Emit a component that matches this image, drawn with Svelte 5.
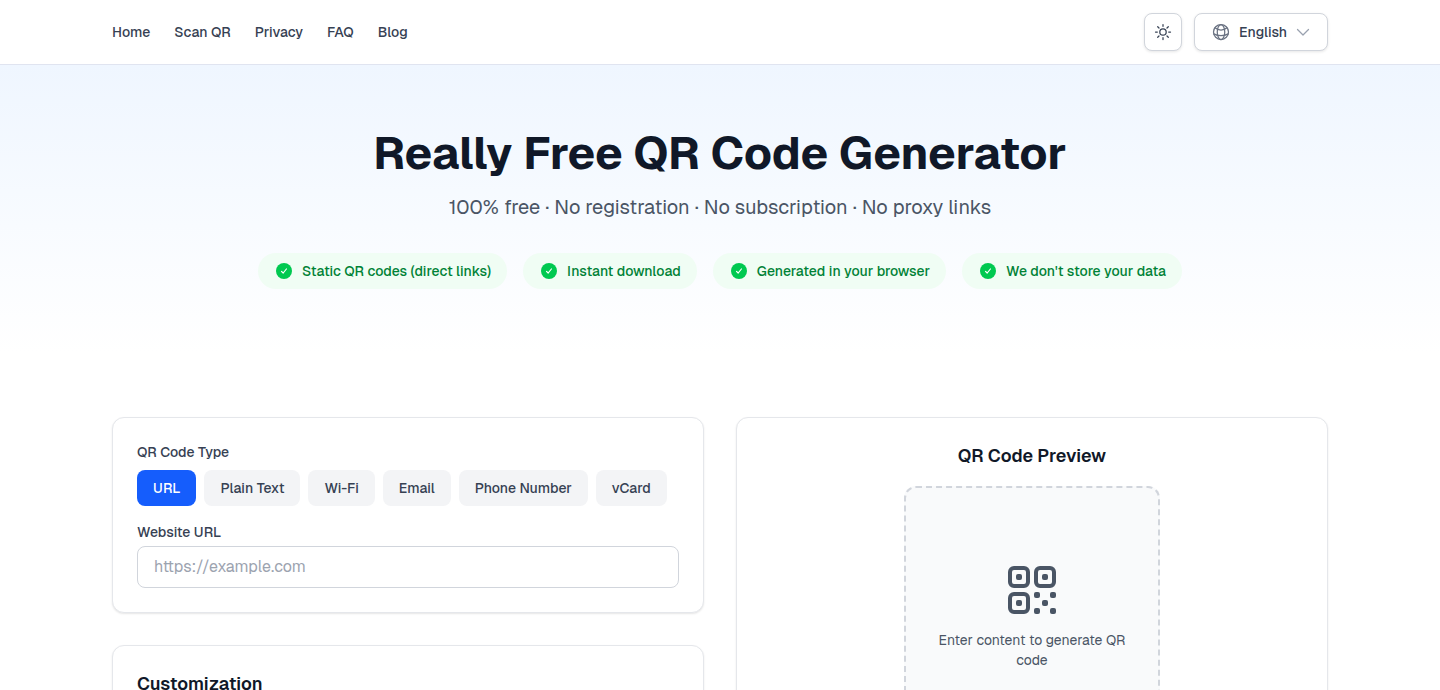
<script lang="ts">
    const links = ['Home', 'Scan QR', 'Privacy', 'FAQ', 'Blog'];

    const badges = [
        'Static QR codes (direct links)',
        'Instant download',
        'Generated in your browser',
        "We don't store your data"
    ];

    const types = ['URL', 'Plain Text', 'Wi-Fi', 'Email', 'Phone Number', 'vCard'];

    let selectedType: string = $state('URL');
    let url: string = $state('');
    let language: string = $state('en');
</script>

<header class="header">
    <div class="container header-inner">
        <nav class="nav">
            {#each links as link}
                <a href="#{link.toLowerCase().replace(' ', '-')}">{link}</a>
            {/each}
        </nav>

        <div class="actions">
            <button class="theme-button" aria-label="Toggle theme">
                <svg viewBox="0 0 20 20" width="20" height="20" fill="none" stroke="currentColor" stroke-width="1.25" stroke-linecap="round">
                    <circle cx="10" cy="10" r="3.2" />
                    <path d="M10 2.5v1.8M10 15.7v1.8M2.5 10h1.8M15.7 10h1.8M4.7 4.7l1.3 1.3M14 14l1.3 1.3M4.7 15.3l1.3-1.3M14 6l1.3-1.3" />
                </svg>
            </button>

            <div class="language">
                <svg class="globe" viewBox="0 0 20 20" width="20" height="20" fill="none" stroke="currentColor" stroke-width="1.25" stroke-linecap="round">
                    <circle cx="10" cy="10" r="7.5" />
                    <ellipse cx="10" cy="10" rx="3.75" ry="7.5" />
                    <path d="M4 5.700c1.600 1.500 3.700 2.300 6 2.300s4.400-.8 6-2.300M2.700 11.900c2.200 1.200 4.600 1.800 7.300 1.800s5.100-.6 7.300-1.800" />
                </svg>
                <select aria-label="Language" bind:value={language}>
                    <option value="en">English</option>
                </select>
                <svg class="chevron" viewBox="0 0 16 16" width="16" height="16" fill="none" stroke="currentColor" stroke-width="1.25" stroke-linecap="round" stroke-linejoin="round">
                    <path d="M2.5 5.5L8 11l5.500-5.500" />
                </svg>
            </div>
        </div>
    </div>
</header>

<section class="hero">
    <div class="container">
        <h1>Really Free QR Code Generator</h1>
        <p class="subtitle">100% free · No registration · No subscription · No proxy links</p>

        <ul class="badges">
            {#each badges as badge}
                <li>
                    <svg viewBox="0 0 20 20" width="20" height="20">
                        <circle cx="10" cy="10" r="8" fill="#00c950" />
                        <path d="M7.5 10.3l1.700 1.700 3.200-4" fill="none" stroke="white" stroke-width="1.2" stroke-linecap="round" stroke-linejoin="round" />
                    </svg>
                    {badge}
                </li>
            {/each}
        </ul>
    </div>
</section>

<main class="container main">
    <div class="column">
        <!-- Content type and its form -->
        <div class="card">
            <p class="label" id="type-label">QR Code Type</p>
            <div class="types" role="group" aria-labelledby="type-label">
                {#each types as type}
                    <button class:active={selectedType === type} onclick={() => (selectedType = type)}>{type}</button>
                {/each}
            </div>

            <label class="label" for="url">Website URL</label>
            <input id="url" type="url" placeholder="https://example.com" bind:value={url} />
        </div>

        <div class="card">
            <h2>Customization</h2>
        </div>
    </div>

    <div class="card preview">
        <h2>QR Code Preview</h2>
        <div class="preview-box">
            <svg viewBox="0 0 24 24" width="48" height="48" fill="none" stroke="currentColor" stroke-width="2">
                <rect x="1" y="1" width="9" height="9" rx="2" />
                <rect x="14" y="1" width="9" height="9" rx="2" />
                <rect x="1" y="14" width="9" height="9" rx="2" />
                <g fill="currentColor" stroke="none">
                    <rect x="4" y="4" width="3" height="3" rx="1" />
                    <rect x="17" y="4" width="3" height="3" rx="1" />
                    <rect x="4" y="17" width="3" height="3" rx="1" />
                    <rect x="13" y="13" width="3" height="3" rx="1" />
                    <rect x="21" y="13" width="3" height="3" rx="1" />
                    <rect x="17" y="17" width="3" height="3" rx="1" />
                    <rect x="13" y="21" width="3" height="3" rx="1" />
                    <rect x="21" y="21" width="3" height="3" rx="1" />
                </g>
            </svg>
            <p>Enter content to generate QR code</p>
        </div>
    </div>
</main>

<style>
    :global(body) {
        margin: 0;
        background: #ffffff;
        color: #101828;
        font-family: Geist, Inter, sans-serif;
        font-size: 14px;
        line-height: 20px;
    }

    h1, h2, p, ul {
        margin: 0;
        padding: 0;
    }

    button, input, select {
        box-sizing: border-box;
        font: inherit;
    }

    svg {
        display: block;
        flex-shrink: 0;
    }

    .container {
        box-sizing: border-box;
        max-width: 1280px;
        margin: 0 auto;
        padding: 0 32px;
    }

    /* Header */
    .header {
        border-bottom: 1px solid #e0e4f0;
    }

    .header-inner {
        display: flex;
        align-items: center;
        justify-content: space-between;
        height: 64px;
    }

    .nav {
        display: flex;
        gap: 24px;
    }

    .nav a {
        color: #364153;
        font-weight: 500;
        text-decoration: none;
    }

    .actions {
        display: flex;
        gap: 12px;
    }

    .theme-button, .language select {
        height: 38px;
        border: 1px solid #d1d5dc;
        border-radius: 8px;
        background: #ffffff;
        box-shadow: 0 1px 3px rgba(0, 0, 0, 0.1);
        color: #364153;
        cursor: pointer;
    }

    .theme-button {
        padding: 0 8px;
    }

    .language {
        position: relative;
    }

    .language select {
        appearance: none;
        padding: 0 39px 0 44px;
        font-weight: 500;
    }

    /* Icons lie over the select and let clicks through */
    .language svg {
        position: absolute;
        pointer-events: none;
    }

    .globe {
        top: 9px;
        left: 17px;
        color: #6a7282;
    }

    .chevron {
        top: 11px;
        right: 17px;
        color: #99a1af;
    }

    /* Hero */
    .hero {
        padding: 64px 0;
        background: linear-gradient(to bottom, #eff6ff, #ffffff);
        text-align: center;
    }

    h1 {
        font-size: 46px;
        font-weight: 700;
        line-height: 48px;
    }

    .subtitle {
        margin: 16px 0 32px;
        color: #4a5565;
        font-size: 20px;
        line-height: 28px;
    }

    .badges {
        display: flex;
        flex-wrap: wrap;
        justify-content: center;
        gap: 16px;
        list-style: none;
    }

    .badges li {
        display: flex;
        align-items: center;
        gap: 8px;
        padding: 8px 16px;
        border-radius: 18px;
        background: #f0fdf4;
        color: #008236;
        font-weight: 500;
    }

    /* Generator */
    .main {
        display: grid;
        grid-template-columns: 1fr 1fr;
        gap: 32px;
        padding-top: 64px;
        padding-bottom: 64px;
    }

    .column {
        display: flex;
        flex-direction: column;
        gap: 32px;
    }

    .card {
        padding: 24px;
        border: 1px solid #e5e7eb;
        border-radius: 12px;
        background: #ffffff;
        box-shadow: 0 1px 2px rgba(0, 0, 0, 0.1);
    }

    .label {
        display: block;
        color: #364153;
        font-weight: 500;
    }

    .types {
        display: flex;
        flex-wrap: wrap;
        gap: 8px;
        margin: 8px 0 16px;
    }

    .types button {
        padding: 8px 16px;
        border: none;
        border-radius: 8px;
        background: #f3f4f6;
        color: #364153;
        font-weight: 500;
        cursor: pointer;
    }

    .types button.active {
        background: #155dfc;
        color: #ffffff;
    }

    input {
        display: block;
        width: 100%;
        margin-top: 4px;
        padding: 8px 16px;
        border: 1px solid #d1d5dc;
        border-radius: 8px;
        color: #101828;
        font-size: 16px;
        line-height: 24px;
    }

    input::placeholder {
        color: #9ca3af;
    }

    h2 {
        font-size: 18px;
        font-weight: 600;
        line-height: 28px;
    }

    .preview {
        display: flex;
        flex-direction: column;
        align-items: center;
        gap: 16px;
    }

    .preview-box {
        display: flex;
        flex-direction: column;
        align-items: center;
        justify-content: center;
        gap: 16px;
        box-sizing: border-box;
        width: 256px;
        height: 264px;
        padding: 0 24px;
        border: 2px dashed #d1d5dc;
        border-radius: 12px;
        background: #f9fafb;
        color: #4a5565;
        text-align: center;
    }
</style>
